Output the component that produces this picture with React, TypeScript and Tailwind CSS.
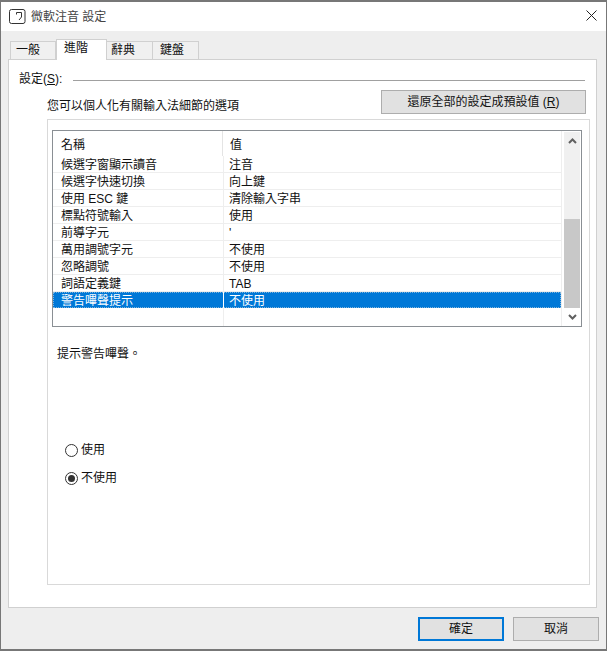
const font = "font-['Liberation_Sans','Noto_Sans_CJK_TC',sans-serif]"

const rows = [
  { name: "候選字窗顯示讀音", value: "注音" },
  { name: "候選字快速切換", value: "向上鍵" },
  { name: "使用 ESC 鍵", value: "清除輸入字串" },
  { name: "標點符號輸入", value: "使用" },
  { name: "前導字元", value: "'" },
  { name: "萬用調號字元", value: "不使用" },
  { name: "忽略調號", value: "不使用" },
  { name: "詞語定義鍵", value: "TAB" },
]

function Radio({ label, checked }: { label: string; checked?: boolean }) {
  return (
    <div className="flex items-center h-[16px] gap-[3px]">
      <span className="w-[13px] h-[13px] rounded-full border border-[#333] bg-white flex items-center justify-center">
        {checked && <span className="w-[7px] h-[7px] rounded-full bg-[#333]" />}
      </span>
      <span>{label}</span>
    </div>
  )
}

export default function App() {
  return (
    <div className={`${font} w-[607px] h-[651px] bg-[#eeeeee] text-[12px] leading-[16px] text-[#111] flex flex-col border border-t-2 border-b-2 border-[#777] overflow-hidden`}>
      {/* タイトルバー */}
      <div className="h-[29px] shrink-0 bg-white flex items-center pl-[8px] pr-[9px]">
        <svg width="17" height="15" viewBox="0 0 17 15" fill="none" stroke="#333" strokeWidth="1">
          <rect x="0.5" y="0.5" width="15.5" height="14" rx="2" />
          <path d="M7.5 5.5V3.5h5V8l-2.5 3" />
        </svg>
        <span className="ml-[5px] text-[#444]">微軟注音 設定</span>
        <svg className="ml-auto mb-[2px]" width="11" height="11" viewBox="0 0 11 11" stroke="#222" strokeWidth="1">
          <path d="M0.5 0.5l10 10M10.5 0.5l-10 10" />
        </svg>
      </div>

      {/* タブ */}
      <div className="flex items-end h-[28px] shrink-0 pl-[9px]">
        <div className="w-[46px] h-[18px] bg-[#f0f0f0] border border-b-0 border-[#d0d0d0] pl-[5px]">一般</div>
        <div className="w-[51px] h-[21px] -mb-px z-10 bg-white border border-b-0 border-[#d0d0d0] pl-[7px]">進階</div>
        <div className="w-[46px] h-[18px] bg-[#f0f0f0] border border-l-0 border-b-0 border-[#d0d0d0] pl-[4px]">辭典</div>
        <div className="w-[46px] h-[18px] bg-[#f0f0f0] border border-l-0 border-b-0 border-[#d0d0d0] pl-[7px]">鍵盤</div>
      </div>

      {/* 設定パネル */}
      <div className="ml-[7px] mr-[9px] h-[549px] shrink-0 bg-white border border-[#d0d0d0] pl-[10px] pr-[10px] pt-[11px] flex flex-col">
        <div className="flex items-center h-[16px]">
          <span>設定(<span className="underline">S</span>):</span>
          <div className="ml-[11px] mr-px mt-[2px] flex-1 h-px bg-[#a0a0a0]" />
        </div>

        <div className="flex items-start justify-between mt-[3px]">
          <span className="ml-[28px] mt-[8px]">您可以個人化有關輸入法細節的選項</span>
          <button className="w-[205px] h-[24px] bg-[#e1e1e1] border border-[#adadad]">還原全部的設定成預設值 (<span className="underline">R</span>)</button>
        </div>

        <div className="ml-[28px] -mr-[4px] h-[466px] mt-[5px] border border-[#d9d9d9] flex flex-col pt-[10px] pl-[4px] pr-[7px]">
          <div className="h-[197px] shrink-0 border border-[#8a8f94] flex">
            <div className="flex-1 flex flex-col border-r border-[#eeeeee]">
              <div className="h-[25px] flex shrink-0">
                <div className="w-[170px] pl-[8px] pt-[2px] flex items-center border-r border-[#e4e4e4]">名稱</div>
                <div className="pl-[7px] pt-[2px] flex items-center">值</div>
              </div>
              {rows.map((row) => (
                <div key={row.name} className="h-[17px] flex shrink-0 border-b border-[#eeeeee]">
                  <div className="w-[171px] pl-[8px] pt-[1px] border-r border-[#eeeeee]">{row.name}</div>
                  <div className="pl-[5px] pt-[1px]">{row.value}</div>
                </div>
              ))}
              <div className="h-[16px] flex shrink-0 bg-[#0078d7] text-white outline-1 -outline-offset-1 outline-dotted outline-[#7fb4dc]">
                <div className="w-[171px] h-[16px] pl-[8px] pt-[1px] border-r border-white">警告嗶聲提示</div>
                <div className="pl-[5px] pt-[1px] h-[16px]">不使用</div>
              </div>
              <div className="flex-1 w-[171px] border-r border-[#eeeeee]" />
            </div>
            {/* スクロールバー */}
            <div className="w-[16px] ml-[2px] mr-px mt-px mb-px flex flex-col items-center">
              <div className="h-[87px] w-full bg-[#f0f0f0] flex justify-center shrink-0">
                <svg className="mt-[6px]" width="9" height="6" viewBox="0 0 9 6" fill="none" stroke="#606060" strokeWidth="2"><path d="M1 5l3.5-3.5L8 5" /></svg>
              </div>
              <div className="w-full h-[89px] bg-[#c8c8c8] shrink-0" />
              <svg className="mt-[6px]" width="9" height="6" viewBox="0 0 9 6" fill="none" stroke="#606060" strokeWidth="2"><path d="M1 1l3.5 3.5L8 1" /></svg>
            </div>
          </div>

          <div className="mt-[19px] pl-[5px]">提示警告嗶聲。</div>

          <div className="mt-[80px] ml-[13px] flex flex-col gap-[12px]">
            <Radio label="使用" />
            <Radio label="不使用" checked />
          </div>
        </div>
      </div>

      {/* フッター */}
      <div className="flex justify-end gap-[9px] mt-[9px] pr-[7px]">
        <button className="w-[86px] h-[24px] bg-[#e1e1e1] border-2 border-[#0078d7]">確定</button>
        <button className="w-[86px] h-[24px] bg-[#e1e1e1] border border-[#adadad]">取消</button>
      </div>
    </div>
  )
}
